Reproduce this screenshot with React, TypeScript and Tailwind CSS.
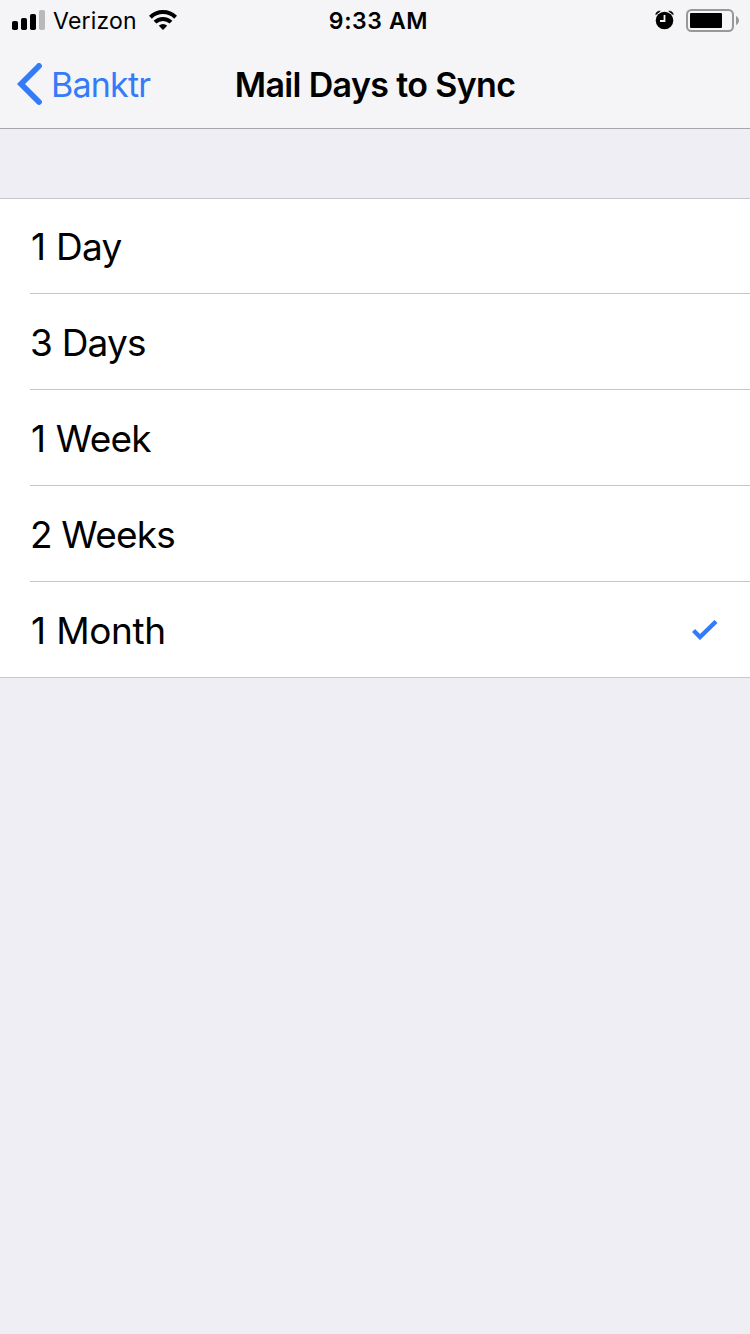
interface SyncOption {
  label: string;
  spacing: string;
  selected?: boolean;
}

// Inter's "1" is narrow, so those labels are nudged and get a wider word gap
const OPTIONS: SyncOption[] = [
  { label: '1 Day', spacing: 'pl-px tracking-[-0.7px] [word-spacing:1px]' },
  { label: '3 Days', spacing: 'tracking-[-0.8px]' },
  { label: '1 Week', spacing: 'pl-px tracking-[-0.8px] [word-spacing:1px]' },
  { label: '2 Weeks', spacing: 'tracking-[-0.8px]' },
  { label: '1 Month', spacing: 'pl-px tracking-[-0.4px] [word-spacing:0.5px]', selected: true },
];

function SignalIcon() {
  return (
    <svg width="33" height="20" viewBox="0 0 33 20" className="shrink-0">
      <rect x="0" y="11" width="6" height="9" rx="1.8" />
      <rect x="9" y="8" width="6" height="12" rx="1.8" />
      <rect x="18" y="4" width="6" height="16" rx="1.8" />
      <rect x="27" y="0" width="6" height="20" rx="1.8" fill="#b9b9bb" />
    </svg>
  );
}

function WifiIcon() {
  return (
    <svg width="28" height="20" viewBox="0 0 28 20" className="shrink-0">
      <g fill="none" stroke="#000" strokeWidth="4">
        <path d="M1.4 7.2a18 18 0 0 1 25.2 0" />
        <path d="M6 12.2a11.3 11.3 0 0 1 16 0" />
      </g>
      <path d="M14 20l-4.2-4.2a6 6 0 0 1 8.4 0z" />
    </svg>
  );
}

function AlarmIcon() {
  return (
    <svg width="20" height="20" viewBox="0 0 20 20" className="shrink-0">
      <circle cx="9.5" cy="10.5" r="8.8" />
      <path
        d="M0.8 4.600C1 2.500 2.500 1 5.200 1.200zM18.200 4.600C18 2.500 16.500 1 13.800 1.200z"
        stroke="#000"
        strokeWidth="0.8"
      />
      <path d="M9.5 5v6H5" fill="none" stroke="#f5f5f7" strokeWidth="1.8" />
    </svg>
  );
}

function BatteryIcon() {
  return (
    <svg width="53" height="23" viewBox="0 0 53 23" className="shrink-0">
      <rect
        x="1"
        y="1"
        width="46"
        height="21"
        rx="4.5"
        fill="none"
        stroke="#98989a"
        strokeWidth="2"
      />
      <rect x="4" y="4" width="32" height="15" rx="1" />
      <path d="M50 7c4 1.8 4 7.2 0 9z" fill="#98989a" />
    </svg>
  );
}

function StatusBar() {
  return (
    <div className="grid h-10 grid-cols-[1fr_auto_1fr] items-center pr-[11px] pl-3 text-[23px]">
      <div className="flex items-center">
        <SignalIcon />
        <span className="ml-2 pt-0.5 tracking-[0.2px]">Verizon</span>
        <span className="ml-3">
          <WifiIcon />
        </span>
      </div>
      <span className="pt-0.5 pl-1.5 font-semibold tracking-[0.6px]">9:33 AM</span>
      <div className="flex items-center justify-end gap-[11px]">
        <AlarmIcon />
        <BatteryIcon />
      </div>
    </div>
  );
}

function NavBar() {
  return (
    <div className="grid h-[88px] grid-cols-[1fr_auto_1fr] items-center px-[17px]">
      <button className="flex items-center text-left text-[34px] text-[#347cf7]">
        <svg width="26" height="42" viewBox="0 0 26 42" className="shrink-0">
          <path
            d="M22 3L4 21l18 18"
            fill="none"
            stroke="currentColor"
            strokeWidth="5.8"
            strokeLinecap="round"
          />
        </svg>
        <span className="ml-2 tracking-[-0.8px]">Banktr</span>
      </button>
      <h1 className="text-[34px] font-semibold tracking-[-0.65px]">Mail Days to Sync</h1>
    </div>
  );
}

function OptionRow({ label, spacing, selected }: SyncOption) {
  return (
    <li className="ml-[30px] flex h-24 items-center justify-between border-b border-[#c8c7cc] pr-8 first:h-[95px] last:ml-0 last:pl-[30px]">
      <span className={`pt-0.5 text-[37px] ${spacing}`}>{label}</span>
      {selected && (
        <svg width="26" height="20" viewBox="0 0 26 20" className="shrink-0">
          <path
            d="M1.5 10.5L8 17 24 1.5"
            fill="none"
            stroke="#347cf7"
            strokeWidth="4.4"
          />
        </svg>
      )}
    </li>
  );
}

export default function App() {
  return (
    <div className="min-h-screen bg-[#efeef4] font-['Inter','Liberation_Sans',sans-serif] text-black">
      <header className="border-b border-[#a7a7aa] bg-[#f5f5f7]">
        <StatusBar />
        <NavBar />
      </header>
      <ul className="mt-[69px] border-t border-[#c8c7cc] bg-white">
        {OPTIONS.map((option) => (
          <OptionRow key={option.label} {...option} />
        ))}
      </ul>
    </div>
  );
}
